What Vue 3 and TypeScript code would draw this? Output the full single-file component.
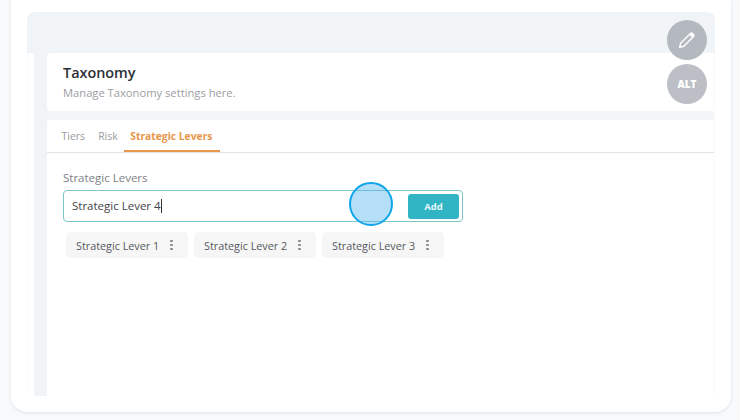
<script setup lang="ts">
const tabs: { label: string; active?: boolean }[] = [
  { label: 'Tiers' },
  { label: 'Risk' },
  { label: 'Strategic Levers', active: true },
]
const chips: string[] = ['Strategic Lever 1', 'Strategic Lever 2', 'Strategic Lever 3']
</script>

<template>
  <div class="page">
    <div class="shell">
      <div class="panel">
        <div class="strip"></div>
        <div class="body">
          <div class="rail"></div>
          <div class="gutter"></div>
          <div class="content">
            <header class="head">
              <h1>Taxonomy</h1>
              <p>Manage Taxonomy settings here.</p>
            </header>
            <section class="card">
              <nav class="tabs">
                <span v-for="t in tabs" :key="t.label" class="tab" :class="{ active: t.active }">{{ t.label }}</span>
              </nav>
              <div class="form">
                <div class="label">Strategic Levers</div>
                <div class="field">
                  <div class="value">Strategic Lever 4<i class="caret"></i></div>
                  <button class="add">Add</button>
                </div>
                <div class="chips">
                  <div v-for="c in chips" :key="c" class="chip">
                    <span>{{ c }}</span>
                    <span class="kebab"><b></b><b></b><b></b></span>
                  </div>
                </div>
              </div>
            </section>
          </div>
        </div>
      </div>
    </div>

    <div class="fab edit">
      <svg width="20" height="20" viewBox="0 0 20 20" fill="none">
        <path d="M2.6 17.4 L3.7 13.2 L13.4 3.5 Q14.4 2.6 15.4 3.4 L16.6 4.6 Q17.4 5.6 16.5 6.6 L6.8 16.3 Z" stroke="#fff" stroke-width="1.4" stroke-linejoin="round"/>
        <path d="M12.2 4.7 L15.3 7.8 L16.5 6.6 Q17.4 5.6 16.6 4.6 L15.4 3.4 Q14.4 2.6 13.4 3.5 Z" fill="#fff"/>
      </svg>
    </div>
    <div class="fab alt">ALT</div>
    <div class="pointer"></div>
  </div>
</template>

<style>
html, body { margin: 0; background: #f7f9fb; }
</style>

<style scoped>
.page {
  position: relative;
  width: 740px;
  height: 420px;
  overflow: hidden;
  background: #f7f9fb;
  font-family: "Open Sans", "Noto Sans", sans-serif;
  box-sizing: border-box;
  padding: 0 9px 8px 11px;
}
.shell {
  height: 412px;
  box-sizing: border-box;
  background: #fff;
  border-radius: 0 0 16px 16px;
  box-shadow: 0 1px 3px rgba(60, 70, 90, 0.12);
  padding: 12px 16px 16px;
}
.panel {
  height: 384px;
  display: flex;
  flex-direction: column;
  border-radius: 8px 8px 0 0;
  overflow: hidden;
}
.strip { height: 41px; flex: none; background: #f1f4f7; }
.body { flex: 1; display: flex; min-height: 0; }
.rail {
  width: 7px;
  height: 340px;
  flex: none;
  background: #fff;
  border-left: 1px solid #fbfbfb;
  box-sizing: border-box;
}
.gutter { width: 13px; flex: none; background: #f1f4f7; }
.content {
  flex: 1;
  display: flex;
  flex-direction: column;
  gap: 9px;
  background: #f3f5f7;
  border-right: 1px solid #fafafa;
  min-width: 0;
}
.head {
  height: 58px;
  box-sizing: border-box;
  background: #fff;
  border-radius: 4px 0 0 4px;
  padding: 11px 16px 0;
}
.head h1 {
  margin: 0;
  font-size: 14.4px;
  line-height: 18px;
  font-weight: 600;
  color: #2c2f35;
}
.head p {
  margin: 3px 0 0;
  font-size: 11.2px;
  line-height: 16px;
  color: #9b9ea3;
}
.card {
  flex: 1;
  background: #fff;
  border-radius: 4px 0 0 0;
}
.tabs {
  height: 33px;
  box-sizing: border-box;
  display: flex;
  border-bottom: 1px solid #e2e3e5;
  padding-left: 8px;
}
.tab {
  height: 32px;
  box-sizing: border-box;
  padding: 9px 6.5px 0;
  font-size: 10.5px;
  line-height: 15px;
  color: #999ca1;
}
.tab.active {
  padding: 9px 8px 0 6px;
  font-size: 10.3px;
  color: #e8964a;
  font-weight: 700;
  border-bottom: 2px solid #e8964a;
}
.form { padding: 17px 16px 0; }
.label {
  font-size: 11.5px;
  line-height: 16px;
  color: #7d8186;
}
.field {
  margin-top: 4px;
  width: 400px;
  height: 32px;
  box-sizing: border-box;
  display: flex;
  align-items: center;
  justify-content: space-between;
  border: 1px solid #7cc5c8;
  border-radius: 4px;
  padding: 0 3px 0 8px;
}
.value {
  font-size: 11.5px;
  line-height: 14px;
  font-weight: 500;
  color: #3f4348;
  display: flex;
  align-items: center;
}
.caret {
  display: inline-block;
  width: 1px;
  height: 14px;
  background: #333;
}
.add {
  width: 51px;
  height: 25px;
  padding: 0;
  border: 0;
  border-radius: 3px;
  background: #31b5c5;
  color: #e4f6f8;
  font-family: inherit;
  font-size: 9.5px;
  font-weight: 700;
}
.chips {
  margin: 10px 0 0 3px;
  display: flex;
  gap: 6px;
}
.chip {
  width: 122px;
  height: 26px;
  box-sizing: border-box;
  display: flex;
  align-items: center;
  justify-content: space-between;
  background: #f6f6f6;
  border-radius: 5px;
  padding: 0 15.5px 0 10px;
  font-size: 10.8px;
  font-weight: 500;
  color: #55595e;
}
.kebab {
  display: flex;
  flex-direction: column;
  gap: 1.2px;
}
.kebab b {
  display: block;
  width: 2.8px;
  height: 2.8px;
  border-radius: 50%;
  background: #85888d;
}
.fab {
  position: absolute;
  left: 667px;
  width: 40px;
  height: 40px;
  border-radius: 50%;
  display: flex;
  align-items: center;
  justify-content: center;
}
.edit { top: 20px; background: #b4b9c0; }
.alt {
  top: 64px;
  background: #bcbfc6;
  color: #fff;
  font-size: 10px;
  font-weight: 800;
}
.pointer {
  position: absolute;
  left: 349px;
  top: 182px;
  width: 44px;
  height: 44px;
  box-sizing: border-box;
  border: 2px solid #0ea5ea;
  border-radius: 50%;
  background: rgba(90, 185, 235, 0.45);
}
</style>
